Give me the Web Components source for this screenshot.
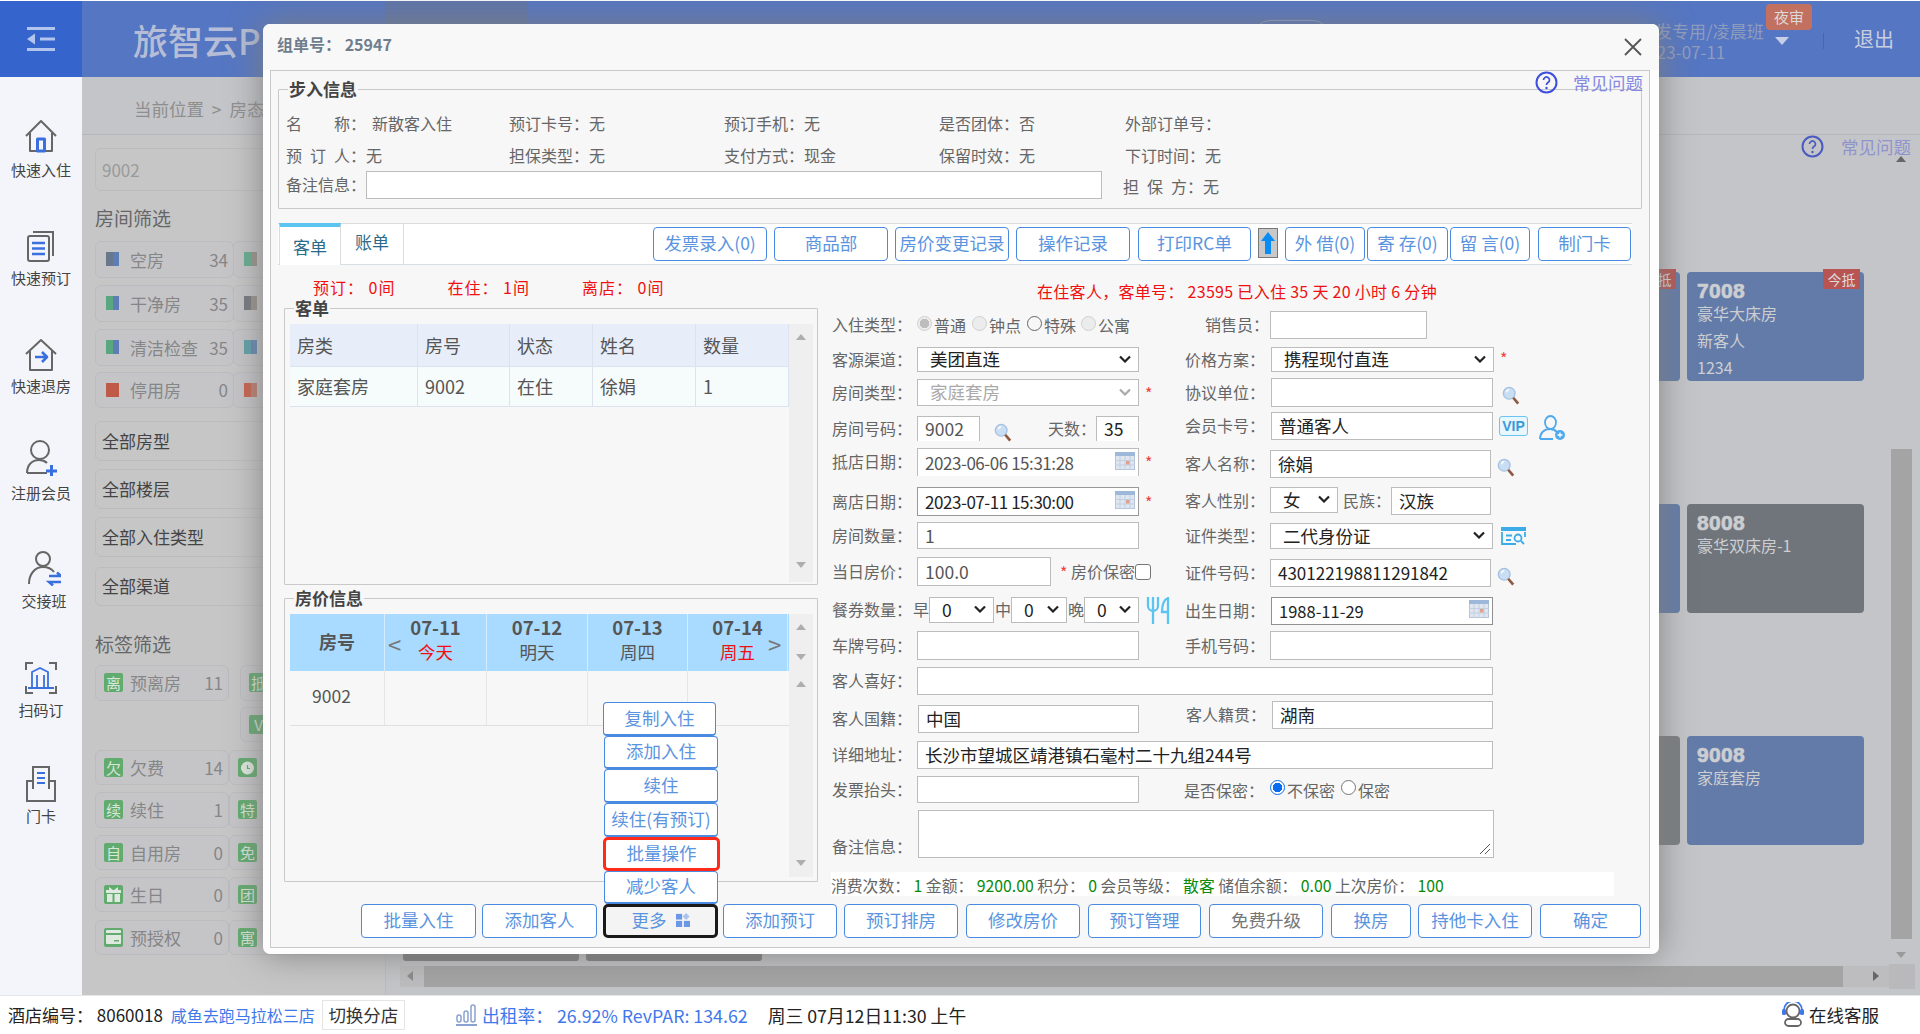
<!DOCTYPE html>
<html lang="zh-CN">
<head>
<meta charset="utf-8">
<title>旅智云PMS</title>
<style>
html,body{margin:0;padding:0;width:1920px;height:1034px;overflow:hidden;background:#fff;font-family:"Noto Sans CJK SC","Noto Sans",sans-serif}
</style>
</head>
<body>
<hotel-app></hotel-app>
<script>
/* labels use the full-width colon, as the original does */
const fw=h=>h.replace(/([\u4e00-\u9fff]):/g,'$1\uFF1A');
const define=(name,render)=>customElements.define(name,class extends HTMLElement{
  connectedCallback(){ if(this.shadowRoot) return; const s=this.attachShadow({mode:'open'}); s.innerHTML=fw(render(this)); }
});
const A=(el,k,d='')=>el.hasAttribute(k)?el.getAttribute(k):d;

const I={
 burger:`<svg width="28" height="24" viewBox="0 0 28 24" fill="#b2c5ee"><rect x="0" y="0" width="28" height="3"/><rect x="13" y="10.500" width="15" height="3"/><rect x="0" y="21" width="28" height="3"/><path d="M8 6.500V17.500L0 12z"/></svg>`,
 home:`<svg width="34" height="34" viewBox="0 0 34 34" fill="none" stroke="#666" stroke-width="2" stroke-linejoin="round"><path d="M2 17 17 2l15 15"/><path d="M6 14v18h22V14"/><rect x="13.500" y="20" width="7" height="12" stroke="#3a6fe0" stroke-width="3"/></svg>`,
 book:`<svg width="34" height="34" viewBox="0 0 34 34" fill="none" stroke="#666" stroke-width="2"><path d="M9 3h20v24"/><rect x="4" y="7" width="21" height="25" rx="2"/><path d="M8 14h13M8 19.500h13M8 25h13" stroke="#3a6fe0" stroke-width="2.500"/></svg>`,
 out:`<svg width="34" height="34" viewBox="0 0 34 34" fill="none" stroke="#666" stroke-width="2" stroke-linejoin="round"><path d="M2 16 17 2l15 14"/><path d="M6 13v19h22V13"/><path d="M11 19h11M18 14l5 5-5 5" stroke="#3a6fe0" stroke-width="2.600"/></svg>`,
 reg:`<svg width="34" height="36" viewBox="0 0 34 36" fill="none" stroke="#666" stroke-width="2"><ellipse cx="16" cy="10" rx="9" ry="9"/><path d="M3 33c0-8 5-13 12-13 3 0 6 1 8 3"/><path d="M3 33h20"/><path d="M22 31h11M27.500 25v12" stroke="#3a6fe0" stroke-width="3"/></svg>`,
 shift:`<svg width="34" height="36" viewBox="0 0 34 36" fill="none" stroke="#666" stroke-width="2"><circle cx="16" cy="9" r="7"/><path d="M2 34c0-10 6-17 14-17 4 0 8 1 11 5"/><path d="M22 26h12l-4-3.500M34 32H22l4 3.500" stroke="#3a6fe0" stroke-width="2.500"/></svg>`,
 scan:`<svg width="34" height="34" viewBox="0 0 34 34" fill="none" stroke="#666" stroke-width="2"><path d="M2 9V2h7M25 2h7v7M2 25v7h7M25 32h7v-7"/><path d="M8 27V11l8-4 8 4v16M4 27h26M13 27V14M20 27V14" stroke="#3a6fe0" stroke-width="1.800"/></svg>`,
 card:`<svg width="34" height="38" viewBox="0 0 34 38" fill="none" stroke="#666" stroke-width="2"><path d="M9 24V2h16v22"/><path d="M13 8h8M13 13h8M13 18h8" stroke="#3a6fe0" stroke-width="2.200"/><path d="M9 16H3v20h28V16h-6" /></svg>`,
 grid:`<svg width="14" height="14" viewBox="0 0 16 16" fill="#6a98e6"><rect x="0" y="1" width="7" height="6.500"/><path d="M11.500 0 15.500 4l-4 4-4-4z" fill="#a9c4ef"/><rect x="0" y="9" width="7" height="7"/><rect x="9" y="9" width="7" height="7"/></svg>`,
 search:`<svg width="18" height="19" viewBox="0 0 20 21" fill="none"><circle cx="8" cy="8" r="6.500" fill="#c9ddf3" stroke="#a5c2e2" stroke-width="1.500"/><path d="M5 7a3.500 3.500 0 0 1 3-3" stroke="#fff" stroke-width="1.500"/><path d="M12.500 13l5.500 6.500" stroke="#8f5a41" stroke-width="3"/></svg>`,
 cal:`<svg width="20" height="18" viewBox="0 0 20 18"><rect x=".5" y=".5" width="19" height="17" fill="#dfe6f0" stroke="#b5c4d8"/><rect width="20" height="4" fill="#9db8d8"/><path d="M0 8.500h20M0 13h20M5 4v14M10 4v14M15 4v14" stroke="#c2cfe0"/><rect x="11" y="9" width="3.500" height="3.500" fill="#e0a090"/></svg>`,
 person:`<svg width="27" height="26" viewBox="0 0 27 26" fill="none" stroke="#4ea9ee" stroke-width="1.800"><ellipse cx="11.500" cy="7.500" rx="5.500" ry="6.500"/><path d="M1 24c0-6 4-10 10-10 3 0 5 1 7 3M1 24h13"/><circle cx="21" cy="20" r="5" fill="#4ea9ee" stroke="none"/><path d="M18.500 20h5M21 17.500v5" stroke="#fff" stroke-width="1.300"/></svg>`,
 id:`<svg width="26" height="18" viewBox="0 0 26 18" fill="none" stroke="#3bace8" stroke-width="1.800"><path d="M1 5v12h14M24 10V5"/><rect x="0" y="0" width="25" height="4" fill="#3bace8" stroke="none"/><path d="M5 8.500h6M5 13h5"/><circle cx="17" cy="11" r="3.500"/><path d="M20 14l3 3"/></svg>`,
 food:`<svg width="24" height="27" viewBox="0 0 24 27" fill="none" stroke="#5cc4f2" stroke-width="2.300"><path d="M2 0v9a5 5 0 0 0 10 0V0M7 0v27"/><path d="M22 1c-5 2-6 8-6 14h6M22 0v27"/></svg>`,
 up:`<svg width="14" height="22" viewBox="0 0 14 22"><path d="M7 0 14 9H10V22H4V9H0z" fill="#0a8cf5"/></svg>`,
 help:`<svg width="23" height="23" viewBox="0 0 23 23" fill="none"><circle cx="11.500" cy="11.500" r="10" stroke="currentColor" stroke-width="2"/><path d="M8.500 9a3 3 0 1 1 4.500 2.600c-1 .6-1.500 1-1.500 2.400" stroke="currentColor" stroke-width="1.700"/><circle cx="11.500" cy="17" r="1.200" fill="currentColor"/></svg>`,
 bars:`<svg width="21" height="22" viewBox="0 0 21 22" fill="none" stroke="#8aa2cf" stroke-width="1.500"><rect x="1" y="11" width="4" height="7" rx="2"/><rect x="8" y="7" width="4" height="11" rx="2"/><rect x="15" y="1" width="4" height="17" rx="2"/><path d="M0 21h21" stroke-width="2"/></svg>`,
 agent:`<svg width="22" height="25" viewBox="0 0 22 25" fill="none"><circle cx="11" cy="9" r="6.500" stroke="#666" stroke-width="1.800"/><path d="M2 10V8a9 9 0 0 1 18 0v2" stroke="#3f78ea" stroke-width="1.800"/><rect x="0" y="7" width="4" height="6" rx="1.500" fill="#3f78ea"/><rect x="18" y="7" width="4" height="6" rx="1.500" fill="#3f78ea"/><rect x="3" y="17" width="16" height="7" rx="3.500" stroke="#666" stroke-width="1.800"/></svg>`,
 gift:`<svg width="15" height="15" viewBox="0 0 15 15" fill="#dfe9df"><rect x="0" y="3" width="15" height="3"/><rect x="1" y="7" width="5.500" height="8"/><rect x="8.500" y="7" width="5.500" height="8"/><path d="M3 0l4 3H3zM12 0 8 3h4z"/></svg>`,
 auth:`<svg width="15" height="14" viewBox="0 0 15 14"><rect width="15" height="14" rx="1" fill="#dfe9df"/><rect y="3" width="15" height="2" fill="#62ab6f"/><rect x="8" y="10" width="5" height="1.500" fill="#62ab6f"/></svg>`,
 clock:`<svg width="15" height="15" viewBox="0 0 15 15" fill="none" stroke="#dfe9df" stroke-width="2"><circle cx="7.500" cy="8" r="5.500" fill="#dfe9df"/><path d="M7.500 5v3.500h2.500" stroke="#62ab6f" stroke-width="1.200"/></svg>`,
 chev:`<svg width="12" height="8" viewBox="0 0 12 8" fill="none" stroke="currentColor" stroke-width="2.200"><path d="M1 1.500l5 5 5-5"/></svg>`
};

/* ------- small atoms ------- */
define('nav-item',el=>`<style>
 :host{display:flex;flex-direction:column;align-items:center;flex:none}
 .i{height:34px;display:flex;align-items:center;justify-content:center}
 .t{font-size:15px;line-height:20px;color:#444;white-space:nowrap}
</style><div class="i">${I[A(el,'icon')]}</div><div class="t" style="margin-top:${+A(el,'gap','7')-1}px;margin-bottom:1px"><slot></slot></div>`);

define('filter-cell',el=>{
 const sw=A(el,'swatch'), tag=A(el,'tag'), svg=A(el,'svg');
 let lead='';
 if(sw){const [a,b]=sw.split(',');lead=`<span class="sw" style="background:linear-gradient(90deg,${a} 50%,${b||a} 50%)"></span>`}
 else if(tag||svg){lead=`<span class="tg">${svg?I[svg]:tag}</span>`}
 return `<style>
 :host{display:flex;align-items:center;box-sizing:border-box;height:100%;flex:none;border:1px solid #bbbcbe;border-radius:6px;padding-left:10px;padding-right:5px;padding-bottom:1px;font-size:17px;color:#858688;background:#c5c5c7}
 .sw{width:13px;height:14px;flex:none;margin-right:11px}
 .tg{width:19px;height:19px;flex:none;margin:0 7px 0 -2px;background:#62ab6f;border-radius:2px;color:#d7e6d7;font-size:15px;line-height:19px;text-align:center;display:flex;align-items:center;justify-content:center;overflow:hidden}
 .l{flex:1;white-space:nowrap}
 .c{flex:none;font-size:17px}
 </style>${lead}<span class="l"><slot></slot></span><span class="c">${A(el,'count')}</span>`});

define('select-cell',el=>`<style>
 :host{display:flex;align-items:center;box-sizing:border-box;width:200px;flex:none;border:1px solid #bbbcbe;border-radius:6px;padding-left:6px;padding-bottom:2px;font-size:17px;color:#444}
</style><slot></slot>`);

define('room-card',el=>`<style>
 :host{display:block;box-sizing:border-box;position:relative;width:177px;height:109px;flex:none;border-radius:4px;padding:8px 10px;background:${A(el,'bg','#637ba8')};color:#ccced2;font-size:16px;line-height:27px}
 .n{font:900 21px/22px "Liberation Sans",sans-serif;letter-spacing:.3px;margin-bottom:-2px;-webkit-text-stroke:.7px #ccced2}
 .b{position:absolute;right:4px;top:-3px;width:37px;height:20px;background:#b85452;font-size:14px;line-height:20px;text-align:center;color:#dcdcdc}
</style><div class="n">${A(el,'no')}</div><slot></slot>${el.hasAttribute('badge')?`<div class="b">${A(el,'badge')}</div>`:''}`);

define('x-btn',el=>`<style>
 :host{display:inline-flex;align-items:center;justify-content:center;box-sizing:border-box;height:34px;flex:none;background:#fff;border:1px solid #4a8ae0;border-radius:4px;padding-bottom:3px;color:#5a94e0;font-size:17.500px;white-space:nowrap}
</style><slot></slot>`);

define('x-input',el=>`<style>
 :host{display:flex;align-items:center;box-sizing:border-box;flex:none;background:#fff;border:1px solid #bcbcbc;padding-left:7px;padding-bottom:1px;font-size:17.500px;color:#222;white-space:nowrap;position:relative}
 .ic{margin-left:auto;margin-right:3px;display:flex}
</style><slot></slot><span class="ic"><slot name="end"></slot></span>`);

define('x-select',el=>`<style>
 :host{display:flex;align-items:center;box-sizing:border-box;flex:none;background:#fff;border:1px solid #bcbcbc;padding-left:12px;padding-bottom:2px;font-size:17.500px;color:#222;white-space:nowrap}
 .c{margin-left:auto;margin-right:7px;display:flex}
</style><slot></slot><span class="c">${I.chev}</span>`);

define('x-radio',el=>{
 const st=A(el,'state','off');
 const css={off:'border:1px solid #d0d0d0;background:#ececec',on:'border:1px solid #d0d0d0;background:radial-gradient(circle,#bdbdbd 0 4.500px,#ececec 5px)',free:'border:1.500px solid #666;background:#f7f7f7',blue:'border:1.500px solid #0a6cf0;background:radial-gradient(circle,#0a6cf0 0 4.500px,#fff 5px)',plain:'border:1.500px solid #777;background:#fff'}[st];
 return `<style>
 :host{display:inline-flex;align-items:center;flex:none;font-size:16px;color:#666;white-space:nowrap}
 .d{width:15px;height:15px;box-sizing:border-box;border-radius:50%;margin-right:2px;margin-bottom:4px;${css}}
 </style><span class="d"></span><slot></slot>`});

define('x-label',el=>`<style>
 :host{display:block;flex:none;font-size:16px;color:#666;white-space:nowrap;box-sizing:border-box;padding-bottom:2px}
</style><slot></slot>`);

define('form-row',el=>`<style>
 :host{display:flex;align-items:center;flex:none}
</style><slot></slot>`);

define('group-box',el=>`<style>
 :host{display:block;box-sizing:border-box;position:relative;border:1px solid #c9c9c9;border-radius:1px;flex:none}
 .lg{position:absolute;left:9px;top:-13px;padding:0 1px;background:#f7f7f7;font-size:17px;line-height:24px;font-weight:700;color:#444}
</style><div class="lg">${A(el,'legend')}</div><slot></slot>`);

define('scroll-track',el=>`<style>
 :host{display:flex;flex-direction:column;align-items:center;box-sizing:border-box;width:24px;flex:none;background:#efefef;position:relative}
 .t{width:0;height:0;border-left:5.500px solid transparent;border-right:5.500px solid transparent;position:absolute;left:6.500px}
</style>${A(el,'arrows').split(',').map(p=>{const [d,y]=p.split(':');return `<span class="t" style="top:${y}px;${d==='u'?'border-bottom':'border-top'}:6px solid #aeaeae"></span>`}).join('')}`);

/* ------- top bar ------- */
define('top-bar',()=>`<style>
 :host{display:flex;grid-area:top;height:76px;background:#5576c2;overflow:hidden}
 .burger{width:82px;flex:none;background:#3464cc;display:flex;align-items:center;justify-content:center}
 .title{flex:none;width:252px;margin-left:51px;box-sizing:border-box;font-size:35px;font-weight:500;line-height:78px;color:#b5bed6;white-space:nowrap;overflow:hidden}
 .band{flex:none;width:143px;background:#5e75ab}
 .pill{flex:none;width:81px;height:60px;margin:19px 0 0 723px;box-sizing:border-box;border:1px solid #8fa0c8;border-radius:20px}
 .r{margin-left:auto;display:flex}
 .who{width:128px;padding-top:19px;font-size:17px;line-height:21px;color:#8f9dbd;white-space:nowrap}
 .alert{width:57px;flex:none;display:flex;flex-direction:column}
 .bd{margin-top:3px;width:46px;height:26px;border-radius:4px;background:#c2705f;color:#dcdad8;font-size:15px;line-height:25px;text-align:center}
 .ar{margin:7px 0 0 9px;width:0;height:0;border-left:7.500px solid transparent;border-right:7.500px solid transparent;border-top:8px solid #c7cfe6}
 .sep{width:1px;height:16px;margin-top:32px;background:#4668a8;flex:none}
 .out{margin-left:30px;margin-right:26px;width:40px;font-size:20px;line-height:76px;color:#c9cee0;white-space:nowrap}
</style>
<div class="burger">${I.burger}</div>
<div class="title">旅智云PMS</div>
<div class="band"></div>
<div class="pill"></div>
<div class="r">
 <div class="who">开发专用/凌晨班<br>2023-07-11</div>
 <div class="alert"><div class="bd">夜审</div><div class="ar"></div></div>
 <div class="sep"></div>
 <div class="out">退出</div>
</div>`);

/* ------- side nav ------- */
define('side-nav',()=>`<style>
 :host{grid-area:side;display:flex;flex-direction:column;background:#f4f5fa;overflow:hidden}
</style>
<nav-item icon="home" gap="8" style="margin-top:42px">快速入住</nav-item>
<nav-item icon="book" gap="6" style="margin-top:48px">快速预订</nav-item>
<nav-item icon="out" gap="5" style="margin-top:49px">快速退房</nav-item>
<nav-item icon="reg" gap="9" style="margin-top:44px">注册会员</nav-item>
<nav-item icon="shift" gap="7" style="margin-top:47px;margin-left:6px">交接班</nav-item>
<nav-item icon="scan" gap="6" style="margin-top:49px">扫码订</nav-item>
<nav-item icon="card" gap="6" style="margin-top:46px">门卡</nav-item>`);

/* ------- filter panel ------- */
define('filter-panel',()=>`<style>
 :host{display:block;box-sizing:border-box;width:304px;flex:none;padding-left:13px;background:#c6c6c7;border-right:1px solid #bcbdbf;font-size:17px}
 .search{margin-top:13px;height:43px;width:240px;box-sizing:border-box;border:1px solid #bbbcbe;border-radius:6px;padding-left:6px;line-height:41px;color:#9a9a9a;font-size:17px}
 h3{margin:0;font-size:19px;font-weight:400;line-height:28px;color:#666}
 .row{display:flex}
</style>
<div class="search">9002</div>
<h3 style="margin-top:13px">房间筛选</h3>
<div class="row" style="height:37px;margin-top:9px"><filter-cell style="width:139px" swatch="#69778c,#5f7db5" count="34">空房</filter-cell><filter-cell style="width:140px;margin-left:-1px" swatch="#62ad8f,#9a9189"></filter-cell></div>
<div class="row" style="height:37px;margin-top:7px"><filter-cell style="width:139px" swatch="#5aa77f,#5f7db5" count="35">干净房</filter-cell><filter-cell style="width:140px;margin-left:-1px" swatch="#73787e,#9a9189"></filter-cell></div>
<div class="row" style="height:37px;margin-top:7px"><filter-cell style="width:139px" swatch="#5aa77f,#5f7db5" count="35">清洁检查</filter-cell><filter-cell style="width:140px;margin-left:-1px" swatch="#5f9fa8,#5f85b5"></filter-cell></div>
<div class="row" style="height:36px;margin-top:6px"><filter-cell style="width:139px" swatch="#c05a48" count="0">停用房</filter-cell><filter-cell style="width:140px;margin-left:-1px" swatch="#c9604c,#c07a6a"></filter-cell></div>
<select-cell style="height:40px;margin-top:13px">全部房型</select-cell>
<select-cell style="height:40px;margin-top:8px">全部楼层</select-cell>
<select-cell style="height:40px;margin-top:8px">全部入住类型</select-cell>
<select-cell style="height:39px;margin-top:10px">全部渠道</select-cell>
<h3 style="margin-top:24px">标签筛选</h3>
<div class="row" style="height:36px;margin-top:7px"><filter-cell style="width:134px" tag="离" count="11">预离房</filter-cell><filter-cell style="width:100px;margin-left:11px" tag="抵"></filter-cell></div>
<div class="row" style="height:35px;margin-top:6px"><filter-cell style="width:100px;margin-left:145px" tag="V"></filter-cell></div>
<div class="row" style="height:35px;margin-top:8px"><filter-cell style="width:134px" tag="欠" count="14">欠费</filter-cell><filter-cell style="width:100px" svg="clock"></filter-cell></div>
<div class="row" style="height:36px;margin-top:7px"><filter-cell style="width:134px" tag="续" count="1">续住</filter-cell><filter-cell style="width:100px" tag="特"></filter-cell></div>
<div class="row" style="height:35px;margin-top:7px"><filter-cell style="width:134px" tag="自" count="0">自用房</filter-cell><filter-cell style="width:100px" tag="免"></filter-cell></div>
<div class="row" style="height:35px;margin-top:7px"><filter-cell style="width:134px" svg="gift" count="0">生日</filter-cell><filter-cell style="width:100px" tag="团"></filter-cell></div>
<div class="row" style="height:35px;margin-top:8px"><filter-cell style="width:134px" svg="auth" count="0">预授权</filter-cell><filter-cell style="width:100px" tag="寓"></filter-cell></div>`);

/* ------- room board ------- */
define('room-board',()=>`<style>
 :host{display:flex;flex-direction:column;flex:1;min-width:0}
 .help{display:flex;align-items:center;justify-content:flex-end;height:24px;padding-right:9px;padding-bottom:2px;box-sizing:border-box;color:#8f94cd;font-size:17.500px}
 .help span{color:#4a5cc0;display:flex;margin-right:17px}
 .row{display:flex;justify-content:flex-end;gap:7px;padding-right:56px}
 .bars{display:flex;gap:7px;margin:16px 0 0 17px}
 .bars i{display:block;width:176px;height:100px;background:#7a7a7c;border-radius:3px}
</style>
<div class="help"><span>${I.help}</span>常见问题</div>
<div class="row" style="margin-top:113px"><room-card badge="今抵"></room-card><room-card no="7008" badge="今抵">豪华大床房<br>新客人<br>1234</room-card></div>
<div class="row" style="margin-top:123px"><room-card></room-card><room-card no="8008" bg="#70757c">豪华双床房-1</room-card></div>
<div class="row" style="margin-top:123px"><room-card bg="#7a7e80"></room-card><room-card no="9008">家庭套房</room-card></div>
<div class="bars"><i></i><i></i></div>`);

/* ------- main area ------- */
define('main-area',()=>`<style>
 :host{grid-area:main;position:relative;display:flex;flex-direction:column;background:#c4c5c8;overflow:hidden}
 .crumb{flex:none;height:58px;box-sizing:border-box;border-bottom:1px solid #b5b6b9;padding-left:52px;line-height:64px;font-size:17.500px;color:#8e8e8e;white-space:nowrap}
 .body{flex:1;display:flex;min-height:0}
 .vb{position:absolute;right:8px;top:78px;bottom:31px;width:21px;display:flex;flex-direction:column;align-items:center}
 .vb .thumb{position:absolute;left:0;right:0;top:294px;bottom:25px;background:#a4a4a4}
 .tu,.td{position:absolute;width:0;height:0;border-left:5.500px solid transparent;border-right:5.500px solid transparent;left:5px}
 .tu{top:1px;border-bottom:6px solid #666}
 .td{bottom:6px;border-top:6px solid #9a9a9a}
 .hb{position:absolute;left:318px;right:5px;bottom:8px;height:21px;background:#bdbdbf}
 .hb .thumb{position:absolute;left:24px;width:1419px;top:0;bottom:0;background:#a4a4a4}
 .tl,.tr{position:absolute;top:5px;width:0;height:0;border-top:5.500px solid transparent;border-bottom:5.500px solid transparent}
 .tl{left:7px;border-right:6px solid #8a8a8a}
 .tr{left:1473px;border-left:6px solid #666}
 .cn{position:absolute;right:0;top:0;width:26px;height:25px;background:#b9b9bb;margin-top:-2px}
</style>
<div class="crumb">当前位置 &nbsp;&gt;&nbsp; 房态图</div>
<div class="body"><filter-panel></filter-panel><room-board></room-board></div>
<div class="vb"><span class="tu"></span><span class="thumb"></span><span class="td"></span></div>
<div class="hb"><span class="tl"></span><span class="thumb"></span><span class="tr"></span><span class="cn"></span></div>`);

/* ------- status bar ------- */
define('status-bar',()=>`<style>
 :host{grid-area:status;display:flex;align-items:center;background:#fff;border-top:1px solid #e6e6e6;box-sizing:border-box;padding-left:8px;padding-bottom:1px;font-size:17.800px;color:#222;white-space:nowrap}
 .b{color:#3f78ea}
 .shop{font-size:16px;margin-left:8px}
 .sw{margin-left:7px;border:1px solid #e5e5e5;width:83px;height:30px;box-sizing:border-box;line-height:27px;text-align:center;flex:none;color:#333;font-size:17.500px}
 .ic{display:flex;margin-left:51px;margin-right:5px}
 .kf{margin-left:auto;margin-right:41px;display:flex;align-items:center;gap:5px;font-size:17.500px}
</style>
<span style="font-size:17px">酒店编号: 8060018</span><span class="b shop">咸鱼去跑马拉松三店</span><span class="sw">切换分店</span>
<span class="ic">${I.bars}</span><span class="b">出租率: 26.92% RevPAR: 134.62</span>
<span style="margin-left:20px">周三 07月12日11:30 上午</span>
<span class="kf">${I.agent}<span>在线客服</span></span>`);

/* ------- dialog ------- */
define('checkin-dialog',()=>`<style>
 :host{position:absolute;left:263px;top:24px;width:1396px;height:930px;box-sizing:border-box;display:flex;flex-direction:column;background:#fdfdfd;border-radius:7px;box-shadow:0 0 34px rgba(125,125,125,.95);color:#666;font-size:16px;z-index:5}
 .head{flex:none;height:46px;box-sizing:border-box;padding-bottom:6px;display:flex;align-items:center;background:#f8f8f8;padding-left:14px;border-radius:7px 7px 0 0;font-weight:700;color:#6f7d8c;font-size:16px}
 .close{margin-left:auto;margin-right:17px;display:flex;margin-top:6px}
 .box{flex:none;box-sizing:border-box;margin-left:7px;width:1380px;height:878px;border:1px solid #c9c9c9;background:#f7f7f7;padding:18px 0 0 7px;position:relative}
 .faq{position:absolute;right:6px;top:0;height:22px;display:flex;align-items:center;color:#8688e2;font-size:17.500px;z-index:1}
 .faq span{display:flex;color:#3f4fdd;margin-right:15px}
 .info{display:grid;grid-template-columns:223px 215px 215px 186px auto;padding:21px 0 0 7px;line-height:24px;white-space:nowrap}
 .info>div{height:24px}
 .tabs{display:flex;align-items:flex-start;box-sizing:border-box;margin-top:14px;width:1354px;height:42px;background:#fff;border-top:1px solid #dcdcdc;border-bottom:1px solid #d6dfe4;position:relative}
 .tab{flex:none;box-sizing:border-box;height:40px;font-size:17px;color:#2a6a8a;text-align:center}
 .tab.a{width:62px;margin-left:1px;border-top:4px solid #5cc4f0;line-height:40px;border-right:1px solid #dcdcdc;border-left:1px solid #dcdcdc;margin-top:-1px;height:42px;background:#fff}
 .tab.b{width:63px;line-height:36px;border-right:1px solid #dcdcdc;margin-top:0}
 .tools{display:flex;margin-left:249px;margin-top:3px}
 .arrow{flex:none;box-sizing:border-box;width:20px;height:30px;margin:1px 7px 0;background:#c8c8c8;border:1px solid #777;display:flex;align-items:center;justify-content:center}
 .content{display:flex;flex:none;height:631px}
 .left{width:554px;flex:none}
 .st{padding:11px 0 0 35px;line-height:22px;height:22px;color:#f01010;font-size:16px;letter-spacing:1px;display:flex;white-space:nowrap}
 .st span{width:134.500px;flex:none}
 .st-right{line-height:22px;padding:15px 0 0 205px;height:22px;color:#f01010;font-size:16px;white-space:nowrap;letter-spacing:.3px}
 .gtb{display:flex;margin:15px 0 0 5px}
 .tbl{width:499px;flex:none;display:grid;grid-template-columns:128px 92px 83px 103px 93px;grid-auto-rows:min-content;font-size:18px;color:#555}
 .tbl div{box-sizing:border-box;padding-left:7px;border-right:1px solid #dde3ee;white-space:nowrap}
 .tbl .h{height:43px;line-height:43px;background:#e8eef9;border-bottom:1px solid #dde3ee}
 .tbl .c{height:40px;line-height:39px;background:#f6fbfb;border-bottom:1px solid #dde3ee}
 .price{width:499px;flex:none;position:relative}
 .ph{display:grid;grid-template-columns:95px 102px 101px 100px 100px;background:#a8dbff;height:57px;position:relative;color:#555}
 .ph>div{border-right:1px solid #d4ecff;box-sizing:border-box;text-align:center}
 .ph b{display:block;font-size:18.500px;line-height:22px;padding-top:2px}
 .ph em{display:block;font-style:normal;font-size:17.500px;line-height:27px}
 .ph .red{color:#f01010}
 .ph .rh{line-height:54px;font-weight:700;font-size:18px}
 .ph .nav{position:absolute;top:18px;font-size:24px;line-height:24px;color:#777;font-weight:400;border:0}
 .pb{display:grid;grid-template-columns:95px 102px 101px 100px 100px;height:54px;border-bottom:1px solid #e0e0e0;font-size:17.500px;color:#555}
 .pb>div{border-right:1px solid #e6e6e6;line-height:50px;box-sizing:border-box}
 .form{width:800px;flex:none}
 .cols{display:flex}
 .sub{flex:none}
 .sub.l{width:353px}
 .star{color:#f04040;font-style:normal;font-size:16px;line-height:16px;flex:none}
 .ico{display:flex;flex:none}
 .date{font-size:17px;letter-spacing:-.45px}
 .stats{margin:14px 0 0 -1px;width:783px;height:24px;background:#fff;font-size:15.800px;line-height:28px;white-space:nowrap;color:#666;overflow:hidden}
 .stats b{color:#0a8a0a;font-weight:400}
 .vip{flex:none;width:29px;height:20px;box-sizing:border-box;border:1px solid #6cc5f0;border-radius:3px;background:#e8f6fd;color:#3a9ad8;font:700 14px/18px "Liberation Sans",sans-serif;text-align:center}
 .chk{width:16px;height:16px;box-sizing:border-box;border:1.500px solid #777;border-radius:3px;flex:none;background:#fff}
 .foot{display:flex;margin:8px 0 0 83px}
 .morewrap{position:relative;flex:none;width:115px;margin-left:6px}
 .more{width:115px;background:#f4f4f4;border:3px solid #1a1a1a;border-radius:5px;gap:9px}
 .menu{position:absolute;left:0;bottom:100%;width:117px;display:flex;flex-direction:column;align-items:flex-start}
 .menu x-btn{height:34px;width:114px;margin-left:1px;border-bottom-width:2px}
 .menu x-btn.s33{height:33px}
 .menu x-btn.redb{border:3px solid #ff2a1a;width:117px;margin-left:0;border-radius:5px;padding-bottom:3px}
</style>
<div class="head"><span>组单号: 25947</span><span class="close"><svg width="18" height="18" viewBox="0 0 18 18" fill="none" stroke="#555" stroke-width="1.800"><path d="M1 1l16 16M17 1 1 17"/></svg></span></div>
<div class="box">
 <div class="faq"><span>${I.help}</span>常见问题</div>
 <group-box legend="步入信息" style="width:1364px;height:120px">
  <div class="info">
   <div><span style="letter-spacing:32px">名</span>称:<span style="margin-left:6px">新散客入住</span></div><div>预订卡号:无</div><div>预订手机:无</div><div>是否团体:否</div><div>外部订单号:</div>
  </div>
  <div class="info" style="padding-top:8px">
   <div><span style="letter-spacing:8px">预订</span>人:无</div><div>担保类型:无</div><div>支付方式:现金</div><div>保留时效:无</div><div>下订时间:无</div>
  </div>
  <div style="display:flex;height:28px;margin:4px 0 0 7px;align-items:center">
   <x-label style="width:80px">备注信息:</x-label><x-input style="width:736px;height:28px"></x-input><span style="margin-left:21px;white-space:nowrap;padding-top:1px"><span style="letter-spacing:8px">担保</span>方:无</span>
  </div>
 </group-box>

 <div class="tabs">
  <div class="tab a">客单</div><div class="tab b">账单</div>
  <div class="tools">
   <x-btn style="width:114px">发票录入(0)</x-btn>
   <x-btn style="width:114px;margin-left:7px">商品部</x-btn>
   <x-btn style="width:114px;margin-left:7px">房价变更记录</x-btn>
   <x-btn style="width:114px;margin-left:7px">操作记录</x-btn>
   <x-btn style="width:113px;margin-left:8px">打印RC单</x-btn>
   <div class="arrow">${I.up}</div>
   <x-btn style="width:80px">外 借(0)</x-btn>
   <x-btn style="width:81px;margin-left:2px">寄 存(0)</x-btn>
   <x-btn style="width:80px;margin-left:2px">留 言(0)</x-btn>
   <x-btn style="width:93px;margin-left:8px">制门卡</x-btn>
  </div>
 </div>

 <div class="content">
  <div class="left">
   <div class="st"><span>预订: 0间</span><span>在住: 1间</span><span>离店: 0间</span></div>
   <group-box legend="客单" style="width:534px;height:277px;margin:10px 0 0 6px">
    <div class="gtb">
     <div class="tbl">
      <div class="h">房类</div><div class="h">房号</div><div class="h">状态</div><div class="h">姓名</div><div class="h">数量</div>
      <div class="c">家庭套房</div><div class="c">9002</div><div class="c">在住</div><div class="c">徐娟</div><div class="c">1</div>
     </div>
     <scroll-track arrows="u:10,d:238" style="height:258px"></scroll-track>
    </div>
   </group-box>
   <group-box legend="房价信息" style="width:534px;height:284px;margin:13px 0 0 6px">
    <div class="gtb">
     <div class="price">
      <div class="ph">
       <div class="rh">房号</div>
       <div><b>07-11</b><em class="red">今天</em></div>
       <div><b>07-12</b><em>明天</em></div>
       <div><b>07-13</b><em>周四</em></div>
       <div><b>07-14</b><em class="red">周五</em></div>
       <div class="nav" style="left:98px">&lt;</div><div class="nav" style="left:478px">&gt;</div>
      </div>
      <div class="pb"><div style="padding-left:22px">9002</div><div></div><div></div><div></div><div style="border:0"></div></div>
     </div>
     <scroll-track arrows="u:10,d:40,u:67,d:246" style="height:263px"></scroll-track>
    </div>
   </group-box>
  </div>

  <div class="form">
   <div class="st-right">在住客人&#xFF0C;客单号: 23595 已入住 35 天 20 小时 6 分钟</div>
   <div class="cols">
    <div class="sub l">
     <form-row style="height:28px;margin-top:9px"><x-label style="width:85px">入住类型:</x-label><x-radio state="on">普通</x-radio><x-radio state="off" style="margin-left:6px">钟点</x-radio><x-radio state="free" style="margin-left:6px">特殊</x-radio><x-radio state="off" style="margin-left:5px">公寓</x-radio></form-row>
     <form-row style="height:25px;margin-top:8px"><x-label style="width:85px">客源渠道:</x-label><x-select style="width:222px;height:25px">美团直连</x-select></form-row>
     <form-row style="height:27px;margin-top:7px"><x-label style="width:85px">房间类型:</x-label><x-select style="width:222px;height:27px;color:#aaa">家庭套房</x-select><i class="star" style="margin-left:6px">*</i></form-row>
     <form-row style="height:25px;margin-top:10px"><x-label style="width:85px">房间号码:</x-label><x-input style="width:63px;height:25px;border-bottom:0;color:#555">9002</x-input><span class="ico" style="margin:8px 0 0 14px">${I.search}</span><x-label style="margin-left:36px;width:48px">天数:</x-label><x-input style="width:43px;height:25px;border-bottom:0;padding-left:7px;">35</x-input></form-row>
     <form-row style="height:28px;margin-top:7px"><x-label style="width:85px">抵店日期:</x-label><x-input style="width:222px;height:28px;border-bottom:0;color:#555"><span class="date">2023-06-06 15:31:28</span><span slot="end">${I.cal}</span></x-input><i class="star" style="margin-left:6px">*</i></form-row>
     <form-row style="height:29px;margin-top:11px"><x-label style="width:85px">离店日期:</x-label><x-input style="width:222px;height:29px;border-color:#999"><span class="date">2023-07-11 15:30:00</span><span slot="end">${I.cal}</span></x-input><i class="star" style="margin-left:6px">*</i></form-row>
     <form-row style="height:27px;margin-top:6px"><x-label style="width:85px">房间数量:</x-label><x-input style="width:222px;height:27px;color:#555">1</x-input></form-row>
     <form-row style="height:29px;margin-top:8px"><x-label style="width:85px">当日房价:</x-label><x-input style="width:134px;height:29px;color:#555">100.0</x-input><i class="star" style="margin-left:9px;width:11px">*</i><x-label>房价保密</x-label><span class="chk"></span></form-row>
     <form-row style="height:26px;margin-top:11px"><x-label style="width:81px">餐券数量:</x-label><x-label>早</x-label><x-select style="width:65px;height:26px">0</x-select><x-label style="margin-left:1px">中</x-label><x-select style="width:56px;height:26px">0</x-select><x-label style="margin-left:1px">晚</x-label><x-select style="width:55px;height:26px">0</x-select><span class="ico" style="margin-left:7px">${I.food}</span></form-row>
     <form-row style="height:29px;margin-top:8px"><x-label style="width:85px">车牌号码:</x-label><x-input style="width:222px;height:29px"></x-input></form-row>
    </div>
    <div class="sub">
     <form-row style="height:28px;margin-top:9px"><x-label style="width:65px;margin-left:20px">销售员:</x-label><x-input style="width:157px;height:28px"></x-input></form-row>
     <form-row style="height:25px;margin-top:8px"><x-label style="width:86px">价格方案:</x-label><x-select style="width:223px;height:25px">携程现付直连</x-select><i class="star" style="margin:-4px 0 0 6px">*</i></form-row>
     <form-row style="height:29px;margin-top:6px"><x-label style="width:86px">协议单位:</x-label><x-input style="width:222px;height:29px"></x-input><span class="ico" style="margin:6px 0 0 9px">${I.search}</span></form-row>
     <form-row style="height:28px;margin-top:5px"><x-label style="width:86px">会员卡号:</x-label><x-input style="width:222px;height:28px">普通客人</x-input><span class="vip" style="margin-left:6px">VIP</span><span class="ico" style="margin:4px 0 0 11px">${I.person}</span></form-row>
     <form-row style="height:28px;margin-top:10px"><x-label style="width:85px">客人名称:</x-label><x-input style="width:221px;height:28px">徐娟</x-input><span class="ico" style="margin:6px 0 0 6px">${I.search}</span></form-row>
     <form-row style="height:28px;margin-top:9px"><x-label style="width:85px">客人性别:</x-label><x-select style="width:68px;height:26px;align-self:flex-start">女</x-select><x-label style="margin-left:5px;width:48px">民族:</x-label><x-input style="width:100px;height:28px">汉族</x-input></form-row>
     <form-row style="height:26px;margin-top:8px"><x-label style="width:85px">证件类型:</x-label><x-select style="width:223px;height:26px">二代身份证</x-select><span class="ico" style="margin-left:8px">${I.id}</span></form-row>
     <form-row style="height:28px;margin-top:10px"><x-label style="width:85px">证件号码:</x-label><x-input style="width:221px;height:28px;font-size:17px">430122198811291842</x-input><span class="ico" style="margin:6px 0 0 6px">${I.search}</span></form-row>
     <form-row style="height:28px;margin-top:10px"><x-label style="width:86px">出生日期:</x-label><x-input style="width:222px;height:28px;border-color:#909090;font-size:16.500px">1988-11-29<span slot="end">${I.cal}</span></x-input></form-row>
     <form-row style="height:29px;margin-top:6px"><x-label style="width:85px">手机号码:</x-label><x-input style="width:221px;height:29px"></x-input></form-row>
    </div>
   </div>
   <form-row style="height:28px;margin-top:7px"><x-label style="width:85px">客人喜好:</x-label><x-input style="width:576px;height:28px"></x-input></form-row>
   <form-row style="height:32px;margin-top:6px;align-items:flex-start"><x-label style="width:86px;padding-top:5px">客人国籍:</x-label><x-input style="width:221px;height:28px;margin-top:4px">中国</x-input><x-label style="margin-left:47px;width:86px;padding-top:1px">客人籍贯:</x-label><x-input style="width:221px;height:28px">湖南</x-input></form-row>
   <form-row style="height:28px;margin-top:8px"><x-label style="width:85px">详细地址:</x-label><x-input style="width:576px;height:28px">长沙市望城区靖港镇石毫村二十九组244号</x-input></form-row>
   <form-row style="height:27px;margin-top:7px"><x-label style="width:85px">发票抬头:</x-label><x-input style="width:222px;height:27px"></x-input><x-label style="margin-left:45px;width:86px;padding-top:2px">是否保密:</x-label><x-radio state="blue">不保密</x-radio><x-radio state="plain" style="margin-left:6px">保密</x-radio></form-row>
   <form-row style="height:48px;margin-top:7px;align-items:flex-end"><x-label style="width:86px;padding-bottom:0">备注信息:</x-label><x-input style="width:576px;height:48px"><svg viewBox="0 0 11 11" fill="none" stroke="#555" style="position:absolute;right:3px;bottom:3px;width:11px;height:11px"><path d="M1 11 11 1M6 11l5-5"/></svg></x-input></form-row>
   <div class="stats">消费次数: <b>1</b> 金额: <b>9200.00</b> 积分: <b>0</b> 会员等级: <b>散客</b> 储值余额: <b>0.00</b> 上次房价: <b>100</b></div>
  </div>
 </div>

 <div class="foot">
  <x-btn style="width:115px">批量入住</x-btn>
  <x-btn style="width:115px;margin-left:6px">添加客人</x-btn>
  <div class="morewrap">
   <x-btn class="more">更多 ${I.grid}</x-btn>
   <div class="menu">
    <x-btn style="width:113px;margin-left:0">复制入住</x-btn>
    <x-btn class="s33">添加入住</x-btn>
    <x-btn>续住</x-btn>
    <x-btn>续住(有预订)</x-btn>
    <x-btn class="redb">批量操作</x-btn>
    <x-btn class="s33">减少客人</x-btn>
   </div>
  </div>
  <x-btn style="width:114px;margin-left:5px">添加预订</x-btn>
  <x-btn style="width:114px;margin-left:7px">预订排房</x-btn>
  <x-btn style="width:114px;margin-left:8px">修改房价</x-btn>
  <x-btn style="width:113px;margin-left:8px">预订管理</x-btn>
  <x-btn style="width:114px;margin-left:8px;color:#777">免费升级</x-btn>
  <x-btn style="width:80px;margin-left:8px">换房</x-btn>
  <x-btn style="width:114px;margin-left:7px">持他卡入住</x-btn>
  <x-btn style="width:101px;margin-left:8px">确定</x-btn>
 </div>
</div>`);

define('hotel-app',()=>`<style>
 :host{display:grid;position:relative;width:1920px;height:1034px;box-sizing:border-box;padding-top:1px;grid-template-columns:82px 1fr;grid-template-rows:76px 1fr 39px;grid-template-areas:"top top" "side main" "status status";overflow:hidden;background:#fff}
</style>
<top-bar></top-bar><side-nav></side-nav><main-area></main-area><status-bar></status-bar>
<checkin-dialog></checkin-dialog>`);
</script>
</body>
</html>
